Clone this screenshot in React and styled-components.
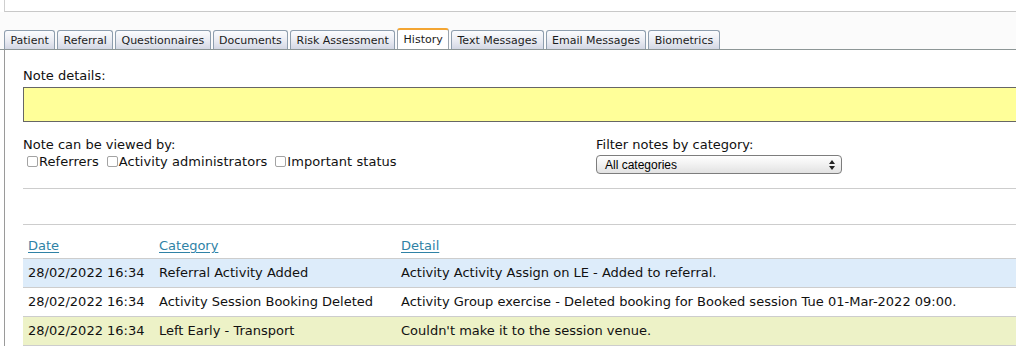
import React from "react";
import styled, { createGlobalStyle } from "styled-components";

const Global = createGlobalStyle`
  html, body { margin: 0; padding: 0; background: #fff; overflow: hidden; }
  body { font-family: "DejaVu Sans", Verdana, sans-serif; color: #111; }
`;

const Page = styled.div`
  width: 1120px;
  padding-left: 4px;
`;

const TopBox = styled.div`
  height: 11px;
  border-left: 1px solid #cfcfcf;
  border-bottom: 1px solid #c8c8c8;
`;

const TabStrip = styled.div`
  display: flex;
  align-items: flex-end;
  gap: 2px;
  padding-top: 16px;
  background: #fbfbfb;
  border-bottom: 1px solid #8d9696;
  margin-left: -4px;
  padding-left: 4px;
`;

const Tab = styled.div`
  box-sizing: border-box;
  height: ${(p) => (p.$active ? "21px" : "19px")};
  padding: 0 5.4px;
  display: flex;
  align-items: center;
  font-size: 11px;
  color: #1c1c1c;
  border: 1px solid ${(p) => (p.$active ? "#9aa4ae" : "#8e9eae")};
  border-top: ${(p) => (p.$active ? "2px solid #f3a533" : "1px solid #8e9eae")};
  border-bottom: none;
  border-radius: 3px 3px 0 0;
  background: ${(p) =>
    p.$active ? "#ffffff" : "linear-gradient(#fbfcfe, #e9ebf2 55%, #d3d7e4)"};
  white-space: nowrap;
`;

const Panel = styled.div`
  border-left: 1px solid #9a9a9a;
  padding: 18px 0 0 18px;
  font-size: 13px;
  line-height: 16px;
`;

const Label = styled.div`
  font-size: 13px;
  line-height: 16px;
`;

const NoteArea = styled.div`
  box-sizing: border-box;
  margin-top: 3px;
  height: 35px;
  background: #ffff99;
  border: 1px solid #666;
`;

const OptionsRow = styled.div`
  display: grid;
  grid-template-columns: 573px 1fr;
  margin-top: 15px;
`;

const CheckRow = styled.div`
  display: flex;
  align-items: center;
  height: 17px;
`;

const CheckItem = styled.label`
  display: flex;
  align-items: center;
  margin-right: 4px;
  letter-spacing: 0.05px;
`;

const Box = styled.span`
  box-sizing: border-box;
  width: 11px;
  height: 11px;
  margin: 0 1px 0 4px;
  border: 1px solid #a3a3a3;
  border-radius: 2px;
  background: #fff;
`;

const Select = styled.div`
  box-sizing: border-box;
  margin-top: 2px;
  width: 246px;
  height: 19px;
  border: 1px solid #7d7d7d;
  border-radius: 4px;
  background: linear-gradient(#ffffff, #f1f1f1 50%, #e2e2e2);
  display: flex;
  align-items: center;
  justify-content: space-between;
  padding: 0 6px 0 8px;
  font-family: "Liberation Sans", Arial, sans-serif;
  font-size: 12px;
  color: #000;
`;

const Rule = styled.div`
  height: 1px;
  background: #cdcdcd;
  margin-top: ${(p) => p.$top}px;
`;

const Table = styled.table`
  width: 100%;
  border-collapse: collapse;
  font-size: 13px;
  line-height: 16px;
`;

const HeadCell = styled.th`
  text-align: left;
  font-weight: normal;
  padding: 13px 5px 4px;
  border-bottom: 1px solid #cdcdcd;
  width: ${(p) => p.$w || "auto"};
`;

const SortLink = styled.a`
  color: #2f82a6;
  text-decoration: underline;
  text-underline-offset: 2px;
`;

const Row = styled.tr`
  background: ${(p) => p.$bg};
  border-bottom: 1px solid #cdcdcd;
`;

const Cell = styled.td`
  padding: 6px 5px;
  white-space: nowrap;
`;

const tabs = [
  "Patient",
  "Referral",
  "Questionnaires",
  "Documents",
  "Risk Assessment",
  "History",
  "Text Messages",
  "Email Messages",
  "Biometrics",
];

const rows = [
  {
    bg: "#ddecfa",
    date: "28/02/2022 16:34",
    cat: "Referral Activity Added",
    detail: "Activity Activity Assign on LE - Added to referral.",
  },
  {
    bg: "#ffffff",
    date: "28/02/2022 16:34",
    cat: "Activity Session Booking Deleted",
    detail:
      "Activity Group exercise - Deleted booking for Booked session Tue 01-Mar-2022 09:00.",
  },
  {
    bg: "#edf2c7",
    date: "28/02/2022 16:34",
    cat: "Left Early - Transport",
    detail: "Couldn't make it to the session venue.",
  },
];

const Arrows = () => (
  <svg width="6" height="10" viewBox="0 0 6 10">
    <path d="M3 0 L6 4 L0 4 Z" fill="#222" />
    <path d="M0 6 L6 6 L3 10 Z" fill="#222" />
  </svg>
);

export default function App() {
  return (
    <>
      <Global />
      <Page>
        <TopBox />
        <TabStrip>
          {tabs.map((t) => (
            <Tab key={t} $active={t === "History"}>
              {t}
            </Tab>
          ))}
        </TabStrip>
        <Panel>
          <Label>Note details:</Label>
          <NoteArea />
          <OptionsRow>
            <div>
              <Label>Note can be viewed by:</Label>
              <CheckRow>
                <CheckItem>
                  <Box />
                  Referrers
                </CheckItem>
                <CheckItem>
                  <Box />
                  Activity administrators
                </CheckItem>
                <CheckItem>
                  <Box />
                  Important status
                </CheckItem>
              </CheckRow>
            </div>
            <div>
              <Label>Filter notes by category:</Label>
              <Select>
                <span>All categories</span>
                <Arrows />
              </Select>
            </div>
          </OptionsRow>
          <Rule $top={14} />
          <Rule $top={35} />
          <Table>
            <thead>
              <tr>
                <HeadCell $w="121px">
                  <SortLink>Date</SortLink>
                </HeadCell>
                <HeadCell $w="232px">
                  <SortLink>Category</SortLink>
                </HeadCell>
                <HeadCell>
                  <SortLink>Detail</SortLink>
                </HeadCell>
              </tr>
            </thead>
            <tbody>
              {rows.map((r, i) => (
                <Row key={i} $bg={r.bg}>
                  <Cell>{r.date}</Cell>
                  <Cell>{r.cat}</Cell>
                  <Cell>{r.detail}</Cell>
                </Row>
              ))}
            </tbody>
          </Table>
        </Panel>
      </Page>
    </>
  );
}
